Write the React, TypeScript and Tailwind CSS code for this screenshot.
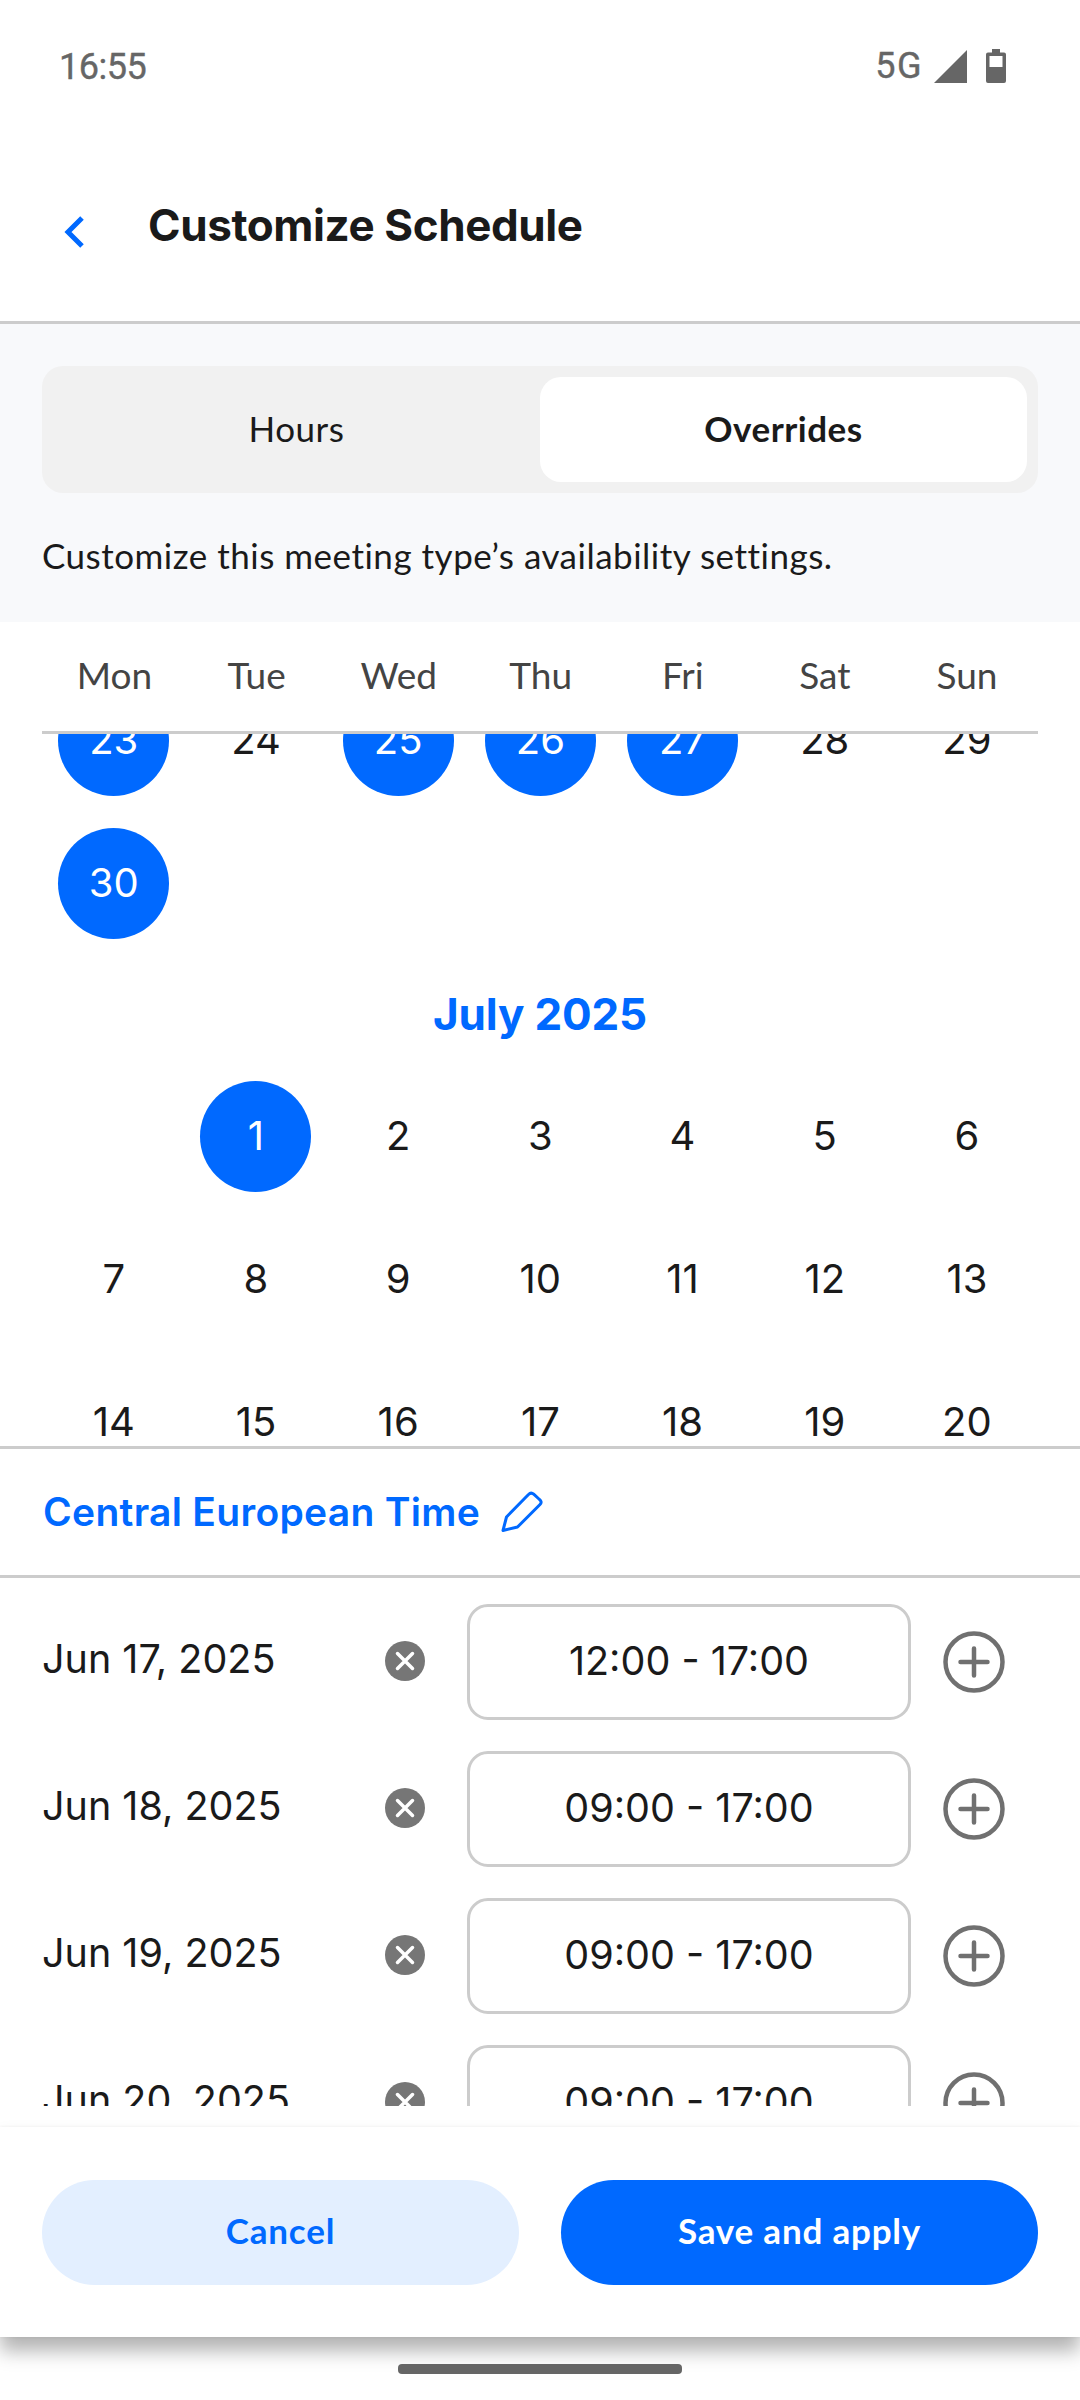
import React from "react";
import clsx from "clsx";

const weekdays = ["Mon", "Tue", "Wed", "Thu", "Fri", "Sat", "Sun"];

const june = [23, 24, 25, 26, 27, 28, 29, 30];
const juneSelected = [23, 25, 26, 27, 30];

// 0 is the empty cell before the first day of the month
const july = [0, ...Array.from({ length: 20 }, (_, i) => i + 1)];
const julySelected = [1];

const overrides = [
  { date: "Jun 17, 2025", hours: "12:00 - 17:00" },
  { date: "Jun 18, 2025", hours: "09:00 - 17:00" },
  { date: "Jun 19, 2025", hours: "09:00 - 17:00" },
  { date: "Jun 20, 2025", hours: "09:00 - 17:00" },
];

function StatusBar() {
  return (
    <div className="flex h-[132px] items-center justify-between pl-[59px] pr-[74px] font-['Roboto',sans-serif] text-[36px] text-[#666]">
      <span className="pt-px tracking-[-0.5px] [-webkit-text-stroke:0.4px_#666]">
        16:55
      </span>
      <div className="flex items-center">
        <span className="mr-[11px] tracking-[1.5px] [-webkit-text-stroke:0.4px_#666]">
          5G
        </span>
        <svg width="33" height="33" viewBox="0 0 33 33" className="mr-[19px]">
          <path d="M33 0V33H0Z" fill="#666" />
        </svg>
        <svg width="20" height="34" viewBox="0 0 20 34">
          <path
            fillRule="evenodd"
            fill="#666"
            d="M6 0h8v3.500h4a2 2 0 0 1 2 2V32a2 2 0 0 1-2 2H2a2 2 0 0 1-2-2V5.500a2 2 0 0 1 2-2h4zM3.500 7v11h13V7z"
          />
        </svg>
      </div>
    </div>
  );
}

function Header() {
  return (
    <header className="flex h-[192px] items-start border-b-[3px] border-[#ccc] pl-[64px]">
      <svg
        width="21"
        height="32"
        viewBox="0 0 21 32"
        fill="none"
        className="mt-[84px]"
      >
        <path d="M18 2L4 16L18 30" stroke="#0069ff" strokeWidth="5" />
      </svg>
      <h1 className="ml-[63px] mt-[63px] font-['Inter',sans-serif] text-[44px] font-[650] leading-[60px] tracking-[-0.4px]">
        Customize Schedule
      </h1>
    </header>
  );
}

function Tabs() {
  return (
    <section className="h-[298px] bg-[#f8f9fb] px-[42px] pt-[42px]">
      <div className="flex h-[127px] rounded-[21px] bg-[#f1f1f1] p-[11px] text-[35px] tracking-[0.5px]">
        <button className="flex-1 pb-[3px]">Hours</button>
        <button className="flex-1 rounded-[21px] bg-white pb-[3px] font-bold">
          Overrides
        </button>
      </div>
      <p className="mt-[37px] whitespace-nowrap text-[35px] leading-[50px] tracking-[0.5px]">
        Customize this meeting type’s availability settings.
      </p>
    </section>
  );
}

type MonthProps = { days: number[]; selected: number[] };

function Month({ days, selected }: MonthProps) {
  return (
    <div className="grid grid-cols-7 gap-y-8 pl-[0.7px]">
      {days.map((day) => (
        <div key={day} className="flex h-[111px] justify-center">
          {day > 0 && (
            <span
              className={clsx(
                "flex size-[111px] items-center justify-center rounded-full pb-px font-['Inter',sans-serif] text-[40px] font-[380]",
                selected.includes(day) && "bg-[#0069ff] text-white"
              )}
            >
              {day}
            </span>
          )}
        </div>
      ))}
    </div>
  );
}

function Calendar() {
  return (
    <section className="flex h-[827px] flex-col border-b-[3px] border-[#ccc] px-[42px]">
      <div className="grid h-[112px] shrink-0 grid-cols-7 items-center border-b-[3px] border-[#ccc] pb-[3px] pl-[1.5px] text-center text-[37px] text-[#444]">
        {weekdays.map((name) => (
          <span key={name}>{name}</span>
        ))}
      </div>
      <div className="min-h-0 flex-1 overflow-hidden">
        {/* list is scrolled part way through June */}
        <div className="-mt-[49px]">
          <Month days={june} selected={juneSelected} />
          <h2 className="mb-[37px] mt-[45px] text-center font-['Inter',sans-serif] text-[44px] font-[650] leading-[60px] tracking-[-0.2px] text-[#0069ff]">
            July 2025
          </h2>
          <Month days={july} selected={julySelected} />
        </div>
      </div>
    </section>
  );
}

function TimeZone() {
  return (
    <div className="flex h-[129px] items-center border-b-[3px] border-[#ccc] pl-[43px] text-[#0069ff]">
      <span className="w-[458px] whitespace-nowrap font-['Inter',sans-serif] text-[39px] font-semibold tracking-[0.3px]">
        Central European Time
      </span>
      <svg
        width="42"
        height="42"
        viewBox="0 0 42 42"
        fill="none"
        stroke="#0069ff"
        strokeWidth="3"
        strokeLinejoin="round"
      >
        <path d="M5.500 26L27.500 3.500Q30 .800 32.700 3.200L38.500 8.500Q41.500 11 39 13.500L16.500 36L2 39.500Z" />
      </svg>
    </div>
  );
}

function OverrideList() {
  return (
    <section className="h-[528px] overflow-hidden pl-[42px] pt-[26px]">
      {overrides.map(({ date, hours }) => (
        <div
          key={date}
          className="mb-[31px] flex h-[116px] items-center font-['Inter',sans-serif] text-[39.500px] font-[380]"
        >
          <span className="w-[343px] whitespace-nowrap pb-[5px]">{date}</span>
          <svg width="40" height="40" viewBox="0 0 40 40" className="mb-[2px]">
            <circle cx="20" cy="20" r="20" fill="#767676" />
            <path
              d="M12.500 12.500L27.500 27.500M27.500 12.500L12.500 27.500"
              stroke="#fff"
              strokeWidth="3.500"
              strokeLinecap="round"
            />
          </svg>
          <div className="ml-[42px] flex h-[116px] w-[444px] items-center justify-center rounded-[21px] border-[3px] border-[#ccc] pb-px">
            {hours}
          </div>
          <svg
            width="62"
            height="62"
            viewBox="0 0 62 62"
            fill="none"
            stroke="#707070"
            className="ml-[32px]"
          >
            <circle cx="31" cy="31" r="28.500" strokeWidth="4.500" />
            <path
              d="M17.500 31H44.500M31 17.500V44.500"
              strokeWidth="4.500"
              strokeLinecap="round"
            />
          </svg>
        </div>
      ))}
    </section>
  );
}

function Footer() {
  return (
    <footer className="mt-[21px] flex h-[210px] items-center gap-[42px] bg-white px-[42px] text-[35px] font-bold tracking-[0.8px] shadow-[0_14px_18px_rgba(0,0,0,0.3),0_0_3px_rgba(0,0,0,0.06)]">
      <button className="h-[105px] flex-1 rounded-full bg-[#e3efff] pb-[3px] text-[#0069ff]">
        Cancel
      </button>
      <button className="h-[105px] flex-1 rounded-full bg-[#0069ff] pb-[3px] text-white">
        Save and apply
      </button>
    </footer>
  );
}

export default function App() {
  return (
    <div className="flex h-[2400px] w-[1080px] flex-col overflow-hidden bg-white font-['Lato',sans-serif] text-[#1a1a1a]">
      <StatusBar />
      <Header />
      <Tabs />
      <Calendar />
      <TimeZone />
      <OverrideList />
      <Footer />
      <div className="relative mx-auto mt-[27px] h-[10px] w-[284px] rounded-[4px] bg-[#666]" />
    </div>
  );
}
